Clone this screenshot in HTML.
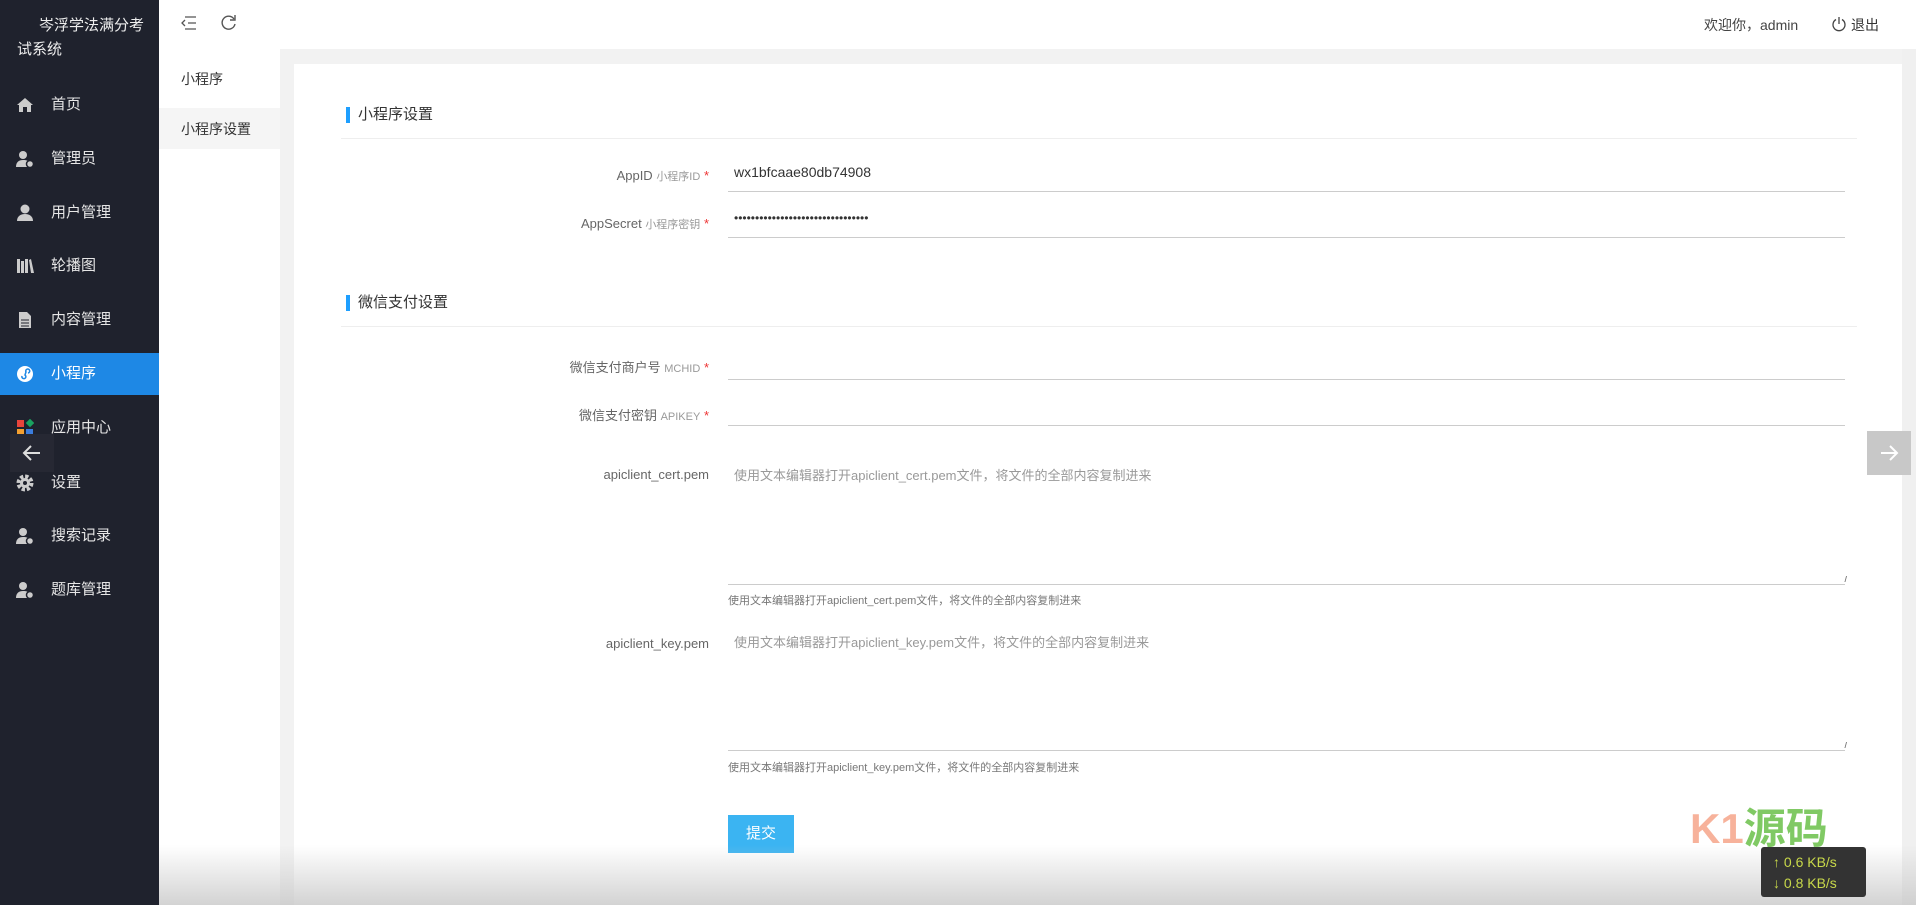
<!DOCTYPE html>
<html><head><meta charset="utf-8"><style>
*{margin:0;padding:0;box-sizing:border-box}
body{width:1916px;height:905px;overflow:hidden;position:relative;background:#f2f2f2;font-family:"Liberation Sans","Noto Sans CJK SC",sans-serif;color:#333}
.abs{position:absolute}
#side{left:0;top:0;width:159px;height:905px;background:#1f222d;color:#fff}
.title{position:absolute;left:17px;top:14px;width:130px;font-size:15px;line-height:24px;text-indent:22px;color:#eee}
.item{position:absolute;left:0;width:159px;height:42px;font-size:15px;color:#e6e6e6;line-height:42px}
.item .ic{position:absolute;left:16px;top:12px;width:18px;height:18px}
.item span{position:absolute;left:51px}
.item.act{background:#1e88e5;color:#fff}
#top{left:159px;top:0;width:1757px;height:49px;background:#fff}
#sub{left:159px;top:49px;width:121px;height:856px;background:#fff}
#card{left:294px;top:64px;width:1608px;height:841px;background:#fff}
.sec{position:absolute;left:346px;font-size:15px;color:#333;padding-left:12px;line-height:18px}
.sec:before{content:"";position:absolute;left:0;top:1px;width:4px;height:16px;background:#1e9fff}
.div{position:absolute;left:341px;width:1516px;height:1px;background:#eee}
.lab{position:absolute;right:calc(1916px - 709px);font-size:13px;color:#666;white-space:nowrap}
.lab small{font-size:11px;color:#999}
.lab i{color:#e33;font-style:normal}
.inp{position:absolute;left:728px;width:1117px;border-bottom:1px solid #ccc;font-size:14px;color:#333;padding-left:6px}
.ta{position:absolute;left:728px;width:1117px;border-bottom:1px solid #ccc;font-size:13px;color:#999;padding:9px 6px}
.ta:after{content:"//";position:absolute;right:0;bottom:0;font-size:8px;color:#777;letter-spacing:-2px}
.help{position:absolute;left:728px;font-size:11px;color:#777}
</style></head><body>
<div id="side" class="abs">
<div class="title">岑浮学法满分考试系统</div>
<div class="item" style="top:84px"><svg class="ic" viewBox="0 0 18 18"><path d="M1 9L9 2l8 7h-2v7h-4v-5H7v5H3V9z" fill="#ccc"/></svg><span>首页</span></div>
<div class="item" style="top:138px"><svg class="ic" viewBox="0 0 18 18"><circle cx="7" cy="5" r="4" fill="#ccc"/><path d="M0 17c0-5 3-7 7-7s5 1 6 2v5z" fill="#ccc"/><circle cx="14" cy="14" r="3.5" fill="#ccc" stroke="#1f222d" stroke-width="1.5"/></svg><span>管理员</span></div>
<div class="item" style="top:192px"><svg class="ic" viewBox="0 0 18 18"><circle cx="9" cy="5" r="4.5" fill="#ccc"/><path d="M1 17c0-5 4-7 8-7s8 2 8 7z" fill="#ccc"/></svg><span>用户管理</span></div>
<div class="item" style="top:245px"><svg class="ic" viewBox="0 0 18 18"><rect x="1" y="2" width="3" height="14" fill="#ccc"/><rect x="5" y="4" width="3" height="12" fill="#ccc"/><rect x="9" y="2" width="3" height="14" fill="#ccc"/><path d="M13 3l2-1 3 14h-3z" fill="#ccc"/></svg><span>轮播图</span></div>
<div class="item" style="top:299px"><svg class="ic" viewBox="0 0 18 18"><path d="M3 1h8l4 4v12H3z" fill="#ccc"/><path d="M5 9h8M5 12h8M5 15h8" stroke="#1f222d"/></svg><span>内容管理</span></div>
<div class="item act" style="top:353px"><svg class="ic" viewBox="0 0 18 18"><circle cx="9" cy="9" r="8" fill="#fff"/><path d="M6 11a2 2 0 1 0 3-1l1-3a2 2 0 1 1 2 1" stroke="#1e88e5" stroke-width="1.5" fill="none"/></svg><span>小程序</span></div>
<div class="item" style="top:407px"><svg class="ic" viewBox="0 0 18 18"><rect x="1" y="1" width="7" height="7" fill="#e8453c"/><rect x="11" y="1" width="6" height="6" fill="#1aa260" transform="rotate(45 14 4)"/><rect x="1" y="10" width="7" height="7" fill="#f4a030"/><rect x="10" y="10" width="7" height="7" fill="#3b7ddd"/></svg><span>应用中心</span></div>
<div class="item" style="top:462px"><svg class="ic" viewBox="0 0 18 18"><circle cx="9" cy="9" r="6" fill="none" stroke="#ccc" stroke-width="5" stroke-dasharray="3 1.7"/><circle cx="9" cy="9" r="5" fill="#ccc"/><circle cx="9" cy="9" r="2" fill="#1f222d"/></svg><span>设置</span></div>
<div class="item" style="top:515px"><svg class="ic" viewBox="0 0 18 18"><circle cx="7" cy="5" r="4" fill="#ccc"/><path d="M0 17c0-5 3-7 7-7s5 1 6 2v5z" fill="#ccc"/><circle cx="14" cy="14" r="3.5" fill="#ccc" stroke="#1f222d" stroke-width="1.5"/></svg><span>搜索记录</span></div>
<div class="item" style="top:569px"><svg class="ic" viewBox="0 0 18 18"><circle cx="7" cy="5" r="4" fill="#ccc"/><path d="M0 17c0-5 3-7 7-7s5 1 6 2v5z" fill="#ccc"/><circle cx="14" cy="14" r="3.5" fill="#ccc" stroke="#1f222d" stroke-width="1.5"/></svg><span>题库管理</span></div>
<div class="abs" style="left:10px;top:434px;width:44px;height:38px;background:#262833"><svg width="44" height="38" viewBox="0 0 44 38"><path d="M30 19H14M21 12l-7 7 7 7" stroke="#ddd" stroke-width="2" fill="none"/></svg></div>
</div>
<div id="top" class="abs">
<svg class="abs" style="left:22px;top:15px" width="16" height="16" viewBox="0 0 16 16"><path d="M4 2h11M7 8h8M4 14h11M4 5L1 8l3 3" stroke="#555" stroke-width="1.3" fill="none"/></svg>
<svg class="abs" style="left:61px;top:14px" width="17" height="17" viewBox="0 0 17 17"><path d="M14 5A6.5 6.5 0 1 0 15 10" stroke="#555" stroke-width="1.4" fill="none"/><path d="M15 1v5h-5" stroke="#555" stroke-width="1.4" fill="none"/></svg>
<div class="abs" style="left:1545px;top:15px;font-size:14px;color:#444">欢迎你，admin</div>
<svg class="abs" style="left:1672px;top:16px" width="16" height="16" viewBox="0 0 16 16"><path d="M5 3.5a6 6 0 1 0 6 0" stroke="#444" stroke-width="1.3" fill="none"/><path d="M8 1v7" stroke="#444" stroke-width="1.3"/></svg>
<div class="abs" style="left:1692px;top:15px;font-size:14px;color:#333">退出</div>
</div>
<div id="sub" class="abs">
<div class="abs" style="left:22px;top:20px;font-size:14px;color:#333">小程序</div>
<div class="abs" style="left:0;top:59px;width:121px;height:41px;background:#f5f5f5"></div>
<div class="abs" style="left:22px;top:70px;font-size:14px;color:#333">小程序设置</div>
</div>
<div id="card" class="abs"></div>
<div class="sec" style="top:106px">小程序设置</div>
<div class="div" style="top:138px"></div>
<div class="lab" style="top:168px">AppID <small>小程序ID</small> <i>*</i></div>
<div class="inp" style="top:164px;height:28px">wx1bfcaae80db74908</div>
<div class="lab" style="top:216px">AppSecret <small>小程序密钥</small> <i>*</i></div>
<div class="inp" style="top:211px;height:27px;font-size:12px">••••••••••••••••••••••••••••••••</div>
<div class="sec" style="top:294px">微信支付设置</div>
<div class="div" style="top:326px"></div>
<div class="lab" style="top:357px">微信支付商户号 <small>MCHID</small> <i>*</i></div>
<div class="inp" style="top:350px;height:30px"></div>
<div class="lab" style="top:405px">微信支付密钥 <small>APIKEY</small> <i>*</i></div>
<div class="inp" style="top:396px;height:30px"></div>
<div class="lab" style="top:467px">apiclient_cert.pem</div>
<div class="ta" style="top:456px;height:129px">使用文本编辑器打开apiclient_cert.pem文件，将文件的全部内容复制进来</div>
<div class="help" style="top:592px">使用文本编辑器打开apiclient_cert.pem文件，将文件的全部内容复制进来</div>
<div class="lab" style="top:636px">apiclient_key.pem</div>
<div class="ta" style="top:623px;height:128px">使用文本编辑器打开apiclient_key.pem文件，将文件的全部内容复制进来</div>
<div class="help" style="top:759px">使用文本编辑器打开apiclient_key.pem文件，将文件的全部内容复制进来</div>
<div class="abs" style="left:728px;top:815px;width:66px;height:38px;background:#3bb4f2;color:#fff;font-size:15px;text-align:center;line-height:38px">提交</div>
<div class="abs" style="left:1902px;top:49px;width:14px;height:856px;background:#f0f0f0"></div>
<div class="abs" style="left:1867px;top:431px;width:44px;height:44px;background:#c8c8c8"><svg width="44" height="44" viewBox="0 0 44 44"><path d="M14 22h16M23 15l7 7-7 7" stroke="#fff" stroke-width="2" fill="none"/></svg></div>
<div class="abs" style="left:159px;top:845px;width:1757px;height:60px;background:linear-gradient(rgba(200,200,200,0),rgba(200,200,200,.8))"></div>
<div class="abs" style="left:1690px;top:795px;font-size:42px;color:#f6a58a;font-weight:bold;opacity:.85">K1<span style="color:#6ac04a">源码</span></div>
<div class="abs" style="left:1761px;top:847px;width:105px;height:50px;background:#333;border-radius:3px;color:#c8d84a;font-size:14px;padding:5px 0 0 12px;line-height:21px">↑ 0.6 KB/s<br>↓ 0.8 KB/s</div>
</body></html>
